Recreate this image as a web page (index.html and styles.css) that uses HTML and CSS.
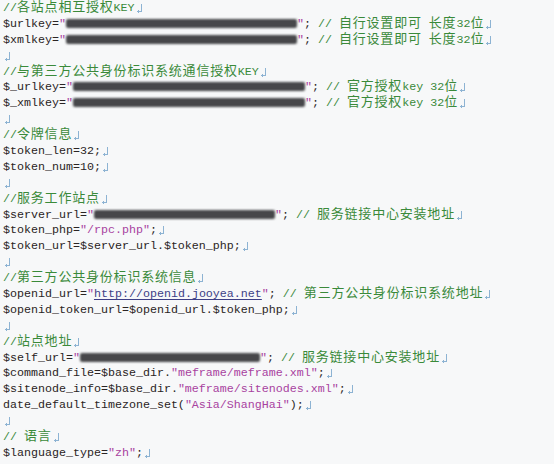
FILE: index.html
```html
<!DOCTYPE html>
<html lang="zh">
<head>
<meta charset="utf-8">
<link rel="stylesheet" href="styles.css">
</head>
<body>
<div class="code">
<div class="l c">//<span class="cn">各站点相互授权</span>KEY<i class="r"></i></div>
<div class="l">$urlkey=<span class="s">"</span><span class="bar b1"></span><span class="s">"</span>; <span class="c">// <span class="cn">自行设置即可</span> <span class="cn">长度</span>32<span class="cn">位</span></span><i class="r"></i></div>
<div class="l">$xmlkey=<span class="s">"</span><span class="bar b1"></span><span class="s">"</span>; <span class="c">// <span class="cn">自行设置即可</span> <span class="cn">长度</span>32<span class="cn">位</span></span><i class="r"></i></div>
<div class="l"><i class="r"></i></div>
<div class="l c">//<span class="cn">与第三方公共身份标识系统通信授权</span>KEY<i class="r"></i></div>
<div class="l">$_urlkey=<span class="s">"</span><span class="bar b2"></span><span class="s">"</span>; <span class="c">// <span class="cn">官方授权</span>key 32<span class="cn">位</span></span><i class="r"></i></div>
<div class="l">$_xmlkey=<span class="s">"</span><span class="bar b2"></span><span class="s">"</span>; <span class="c">// <span class="cn">官方授权</span>key 32<span class="cn">位</span></span><i class="r"></i></div>
<div class="l"><i class="r"></i></div>
<div class="l c">//<span class="cn">令牌信息</span><i class="r"></i></div>
<div class="l">$token_len=32;<i class="r"></i></div>
<div class="l">$token_num=10;<i class="r"></i></div>
<div class="l"><i class="r"></i></div>
<div class="l c">//<span class="cn">服务工作站点</span><i class="r"></i></div>
<div class="l">$server_url=<span class="s">"</span><span class="bar b3"></span><span class="s">"</span>; <span class="c">// <span class="cn">服务链接中心安装地址</span></span><i class="r"></i></div>
<div class="l">$token_php=<span class="s">"/rpc.php"</span>;<i class="r"></i></div>
<div class="l">$token_url=$server_url.$token_php;<i class="r"></i></div>
<div class="l"><i class="r"></i></div>
<div class="l c">//<span class="cn">第三方公共身份标识系统信息</span><i class="r"></i></div>
<div class="l">$openid_url=<span class="s">"<span class="u">http://openid.jooyea.net</span>"</span>; <span class="c">// <span class="cn">第三方公共身份标识系统地址</span></span><i class="r"></i></div>
<div class="l">$openid_token_url=$openid_url.$token_php;<i class="r"></i></div>
<div class="l"><i class="r"></i></div>
<div class="l c">//<span class="cn">站点地址</span><i class="r"></i></div>
<div class="l">$self_url=<span class="s">"</span><span class="bar b4"></span><span class="s">"</span>; <span class="c">// <span class="cn">服务链接中心安装地址</span></span><i class="r"></i></div>
<div class="l">$command_file=$base_dir.<span class="s">"meframe/meframe.xml"</span>;<i class="r"></i></div>
<div class="l">$sitenode_info=$base_dir.<span class="s">"meframe/sitenodes.xml"</span>;<i class="r"></i></div>
<div class="l">date_default_timezone_set(<span class="s">"Asia/ShangHai"</span>);<i class="r"></i></div>
<div class="l"><i class="r"></i></div>
<div class="l c">// <span class="cn">语言</span><i class="r"></i></div>
<div class="l">$language_type=<span class="s">"zh"</span>;<i class="r"></i></div>
</div>
</body>
</html>
```
FILE: styles.css
```css
html, body {
  margin: 0;
  padding: 0;
  background: #f7f8f9;
}

.code {
  padding: 1px 0 0 3px;
  font-family: "Liberation Mono", "Noto Sans CJK SC", monospace;
  font-size: 11.67px;
  color: #2a2424;
}

.l {
  height: 15.9px;
  line-height: 15.9px;
  white-space: pre;
}

.c {
  color: #3a8a3a;
}

.s {
  color: #a8429f;
}

.u {
  color: #3d3f86;
  text-decoration: underline;
  text-decoration-thickness: 1px;
  text-underline-offset: 2px;
}

.cn {
  font-family: "Noto Sans CJK SC", sans-serif;
  font-size: 13px;
  letter-spacing: 0.8px;
  line-height: 10px;
}

.bar {
  display: inline-block;
  height: 9px;
  vertical-align: -1px;
  background: #47474a;
  border-radius: 2px;
  filter: blur(1.3px);
}

.b1 { width: 231px; }
.b2 { width: 232px; }
.b3 { width: 181px; }
.b4 { width: 180px; }

.r {
  display: inline-block;
  width: 7px;
  height: 9px;
  margin-left: 1px;
  vertical-align: -2px;
  background:
    linear-gradient(#8db3d3, #8db3d3) 5px 0 / 1px 8px no-repeat,
    linear-gradient(#8db3d3, #8db3d3) 1px 7px / 5px 1px no-repeat,
    linear-gradient(#8db3d3, #8db3d3) 2px 6px / 1px 3px no-repeat;
}
```
